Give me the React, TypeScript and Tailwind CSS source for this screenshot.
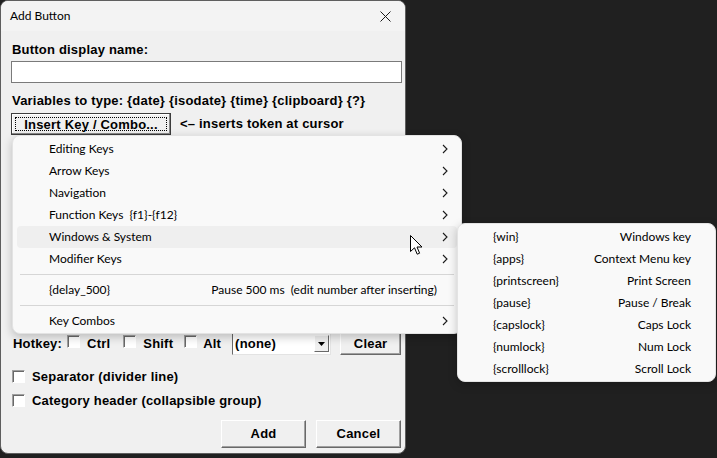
import React from 'react';

const menuFont = { fontFamily: '"Segoe UI", Lato, "Noto Sans", sans-serif' };

const Chevron = () => (
  <svg width="6" height="10" viewBox="0 0 6 10" className="shrink-0">
    <path d="M1 1 L5 5 L1 9" fill="none" stroke="#1a1a1a" strokeWidth="1.1" />
  </svg>
);

const CheckBox = () => (
  <span className="inline-block w-[13px] h-[13px] shrink-0 bg-white border border-t-[#a0a0a0] border-l-[#a0a0a0] border-r-white border-b-white shadow-[inset_1px_1px_0_#696969]" />
);

const classicBtn =
  'bg-[#f0f0f0] border border-t-white border-l-white border-r-[#696969] border-b-[#696969] shadow-[inset_-1px_-1px_0_#a0a0a0] flex items-center justify-center font-bold text-[13px] text-black';

const submenus = [
  'Editing Keys',
  'Arrow Keys',
  'Navigation',
  'Function Keys  {f1}-{f12}',
  'Windows & System',
  'Modifier Keys',
];

const systemKeys = [
  ['{win}', 'Windows key'],
  ['{apps}', 'Context Menu key'],
  ['{printscreen}', 'Print Screen'],
  ['{pause}', 'Pause / Break'],
  ['{capslock}', 'Caps Lock'],
  ['{numlock}', 'Num Lock'],
  ['{scrolllock}', 'Scroll Lock'],
];

export default function App() {
  return (
    <div className="relative w-[717px] h-[458px] bg-[#202020] overflow-hidden">
      {/* Dialog */}
      <div
        className="w-[406px] h-[454px] bg-[#f0f0f0] border border-[#5e5e5e] rounded-[8px] overflow-hidden flex flex-col"
        style={{ fontFamily: '"Liberation Sans", Arial, sans-serif' }}
      >
        <div className="h-[30px] shrink-0 bg-[#f3f3f3] flex items-center justify-between pl-[9px] pr-[10px]">
          <span className="text-[12px] text-black" style={menuFont}>Add Button</span>
          <svg width="11" height="11" viewBox="0 0 11 11" className="mr-[4px]">
            <path d="M0.5 0.5 L10.5 10.5 M10.5 0.5 L0.5 10.5" stroke="#1a1a1a" strokeWidth="1" />
          </svg>
        </div>

        <div className="flex flex-col pl-[10px] pr-[3px] text-[13px] font-bold text-black tracking-[0.2px]">
          <div className="mt-[11px] h-[15px] leading-[15px] pl-[1px]">Button display name:</div>
          <div className="mt-[4px] h-[22px] bg-white border border-[#7a7a7a]" />
          <div className="mt-[10px] h-[15px] leading-[15px] pl-[1px]">
            Variables to type: {'{date}'} {'{isodate}'} {'{time}'} {'{clipboard}'} {'{?}'}
          </div>
          <div className="mt-[5px] h-[22px] flex items-center gap-[9px]">
            <div className="w-[160px] h-[22px] border border-[#3c3c3c] bg-[#f0f0f0] shadow-[inset_-1px_-1px_0_#8a8a8a,inset_1px_1px_0_#ffffff] p-[3px]">
              <div className="h-full border border-dotted border-black flex items-center justify-center leading-none">
                Insert Key / Combo...
              </div>
            </div>
            <span>&lt;&#8211; inserts token at cursor</span>
          </div>

          {/* area hidden under the popup menu */}
          <div className="h-[197px]" />

          <div className="h-[23px] flex items-center">
            <span className="pl-[2px]">Hotkey:</span>
            <span className="ml-[5px]"><CheckBox /></span>
            <span className="ml-[7px]">Ctrl</span>
            <span className="ml-[13px]"><CheckBox /></span>
            <span className="ml-[7px]">Shift</span>
            <span className="ml-[11px]"><CheckBox /></span>
            <span className="ml-[6px]">Alt</span>
            <div className="ml-[11px] w-[99px] h-[23px] bg-white border border-t-[#696969] border-l-[#696969] border-r-[#e3e3e3] border-b-[#e3e3e3] flex items-center justify-between pl-[2px] pr-[1px]">
              <span>(none)</span>
              <div className="w-[15px] h-[17px] bg-[#f0f0f0] border border-t-white border-l-white border-r-[#696969] border-b-[#696969] flex items-center justify-center">
                <svg width="7" height="4" viewBox="0 0 7 4">
                  <path d="M0 0 L7 0 L3.5 4 Z" fill="#000" />
                </svg>
              </div>
            </div>
            <div className={`ml-[9px] w-[61px] h-[22px] ${classicBtn}`}>Clear</div>
          </div>

          <div className="mt-[14px] h-[15px] flex items-center gap-[7px] pl-[1px]">
            <CheckBox />
            <span>Separator (divider line)</span>
          </div>
          <div className="mt-[9px] h-[15px] flex items-center gap-[7px] pl-[1px]">
            <CheckBox />
            <span>Category header (collapsible group)</span>
          </div>

          <div className="mt-[12px] flex justify-end gap-[10px] pr-[1px]">
            <div className={`w-[85px] h-[28px] ${classicBtn}`}>Add</div>
            <div className={`w-[85px] h-[28px] ${classicBtn}`}>Cancel</div>
          </div>
        </div>
      </div>

      {/* Popup menu */}
      <div
        className="absolute left-[12px] top-[135px] w-[450px] h-[199px] bg-[#f9f9f9] border border-[#e3e3e3] rounded-[8px] shadow-[0_3px_10px_rgba(0,0,0,0.22)] pt-[2px] text-[12px] text-black"
        style={menuFont}
      >
        {submenus.map((label, i) => (
          <div
            key={label}
            className={`mx-[4px] h-[22px] rounded-[4px] flex items-center justify-between pl-[32px] pr-[9px] ${
              i === 4 ? 'bg-[#efefef]' : ''
            }`}
          >
            <span className="whitespace-pre">{label}</span>
            <Chevron />
          </div>
        ))}
        <div className="h-[9px] flex items-center mx-[7px]">
          <div className="h-px w-full bg-[#d6d6d6]" />
        </div>
        <div className="mx-[4px] h-[22px] flex items-center justify-between pl-[32px] pr-[20px]">
          <span>{'{delay_500}'}</span>
          <span className="whitespace-pre">Pause 500 ms  (edit number after inserting)</span>
        </div>
        <div className="h-[9px] flex items-center mx-[7px]">
          <div className="h-px w-full bg-[#d6d6d6]" />
        </div>
        <div className="mx-[4px] h-[22px] flex items-center justify-between pl-[32px] pr-[9px]">
          <span>Key Combos</span>
          <Chevron />
        </div>
      </div>

      {/* Submenu */}
      <div
        className="absolute left-[457px] top-[223px] w-[259px] h-[159px] bg-[#f9f9f9] border border-[#e3e3e3] rounded-[8px] shadow-[0_3px_10px_rgba(0,0,0,0.22)] pt-[2px] text-[12px] text-black"
        style={menuFont}
      >
        {systemKeys.map(([token, desc]) => (
          <div key={token} className="mx-[4px] h-[22px] flex items-center justify-between pl-[31px] pr-[20px]">
            <span>{token}</span>
            <span>{desc}</span>
          </div>
        ))}
      </div>

      {/* Mouse pointer */}
      <svg className="absolute left-[410px] top-[235px]" width="13" height="21" viewBox="0 0 13 21">
        <path
          d="M0.5 0.5 L0.5 16.5 L4.5 12.8 L7.2 19.2 L9.6 18.2 L7 12 L12 12 Z"
          fill="#ffffff"
          stroke="#000000"
          strokeWidth="1"
          strokeLinejoin="miter"
        />
      </svg>
    </div>
  );
}
